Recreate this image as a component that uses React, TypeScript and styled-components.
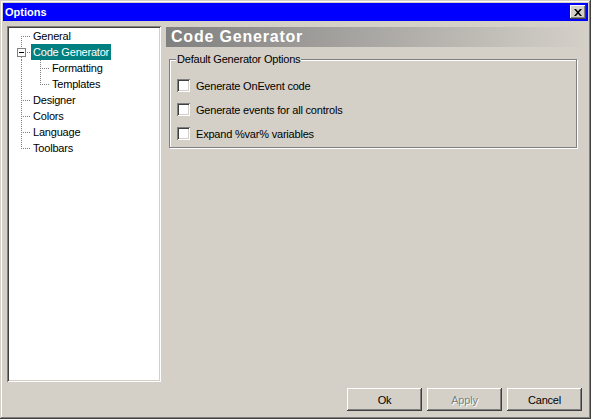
import React from "react";
import styled, { createGlobalStyle } from "styled-components";

const GlobalStyle = createGlobalStyle`
  html, body {
    margin: 0;
    padding: 0;
    background: #d4d0c8;
  }
  body {
    font-family: "Liberation Sans", Arial, sans-serif;
    font-size: 11px;
    letter-spacing: -0.2px;
    color: #000;
  }
`;

const Window = styled.div`
  box-sizing: border-box;
  width: 591px;
  height: 419px;
  padding: 3px;
  display: flex;
  flex-direction: column;
  background: #d4d0c8;
  box-shadow: inset -1px -1px #404040, inset 1px 1px #d4d0c8,
    inset -2px -2px #808080, inset 2px 2px #fff;
`;

const TitleBar = styled.div`
  flex: none;
  height: 18px;
  display: flex;
  align-items: center;
  padding: 0 2px;
  background: #0000ff;
  color: #fff;
  font-weight: bold;
  letter-spacing: 0;
`;

const TitleText = styled.span`
  flex: 1;
`;

const CloseButton = styled.button`
  width: 16px;
  height: 14px;
  padding: 0;
  border: none;
  display: flex;
  align-items: center;
  justify-content: center;
  background: #d4d0c8;
  box-shadow: inset -1px -1px #404040, inset 1px 1px #fff,
    inset -2px -2px #808080;
`;

const Body = styled.div`
  flex: 1;
  min-height: 0;
  margin-top: 5px;
  display: flex;
  gap: 5px;
  padding: 0 2px 0 4px;
`;

const TreePanel = styled.div`
  box-sizing: border-box;
  width: 154px;
  flex: none;
  padding: 2px 2px 2px 4px;
  background: #fff;
  box-shadow: inset 1px 1px #808080, inset -1px -1px #fff,
    inset 2px 2px #404040, inset -2px -2px #d4d0c8;
`;

const TreeRow = styled.div`
  display: flex;
  align-items: center;
  height: 16px;
`;

const TreeLabel = styled.span<{ $selected?: boolean }>`
  margin-left: 1px;
  padding: 0 2px;
  line-height: 16px;
  white-space: nowrap;
  background: ${({ $selected }) => ($selected ? "#008080" : "transparent")};
  color: ${({ $selected }) => ($selected ? "#fff" : "#000")};
`;

const RightPane = styled.div`
  flex: 1;
  display: flex;
  flex-direction: column;
`;

const PageHeader = styled.div`
  margin-top: 1px;
  height: 20px;
  display: flex;
  align-items: center;
  padding-left: 5px;
  background: linear-gradient(to right, #808080, #d4d0c8);
  color: #fff;
  font-size: 16px;
  font-weight: bold;
  letter-spacing: 0.8px;
`;

const GroupBox = styled.div`
  position: relative;
  margin: 12px 9px 0 3px;
  padding: 19px 0 7px 7px;
  display: flex;
  flex-direction: column;
  gap: 11px;
  border: 1px solid #808080;
  box-shadow: 1px 1px 0 #fff, inset 1px 1px 0 #fff;
`;

const Legend = styled.span`
  position: absolute;
  top: -7px;
  left: 6px;
  padding: 0 1px;
  line-height: 13px;
  background: #d4d0c8;
`;

const CheckRow = styled.label`
  display: flex;
  align-items: center;
  gap: 6px;
  height: 13px;
`;

const CheckBox = styled.span`
  width: 13px;
  height: 13px;
  flex: none;
  background: #fff;
  box-shadow: inset 1px 1px #808080, inset -1px -1px #fff,
    inset 2px 2px #404040, inset -2px -2px #d4d0c8;
`;

const Footer = styled.div`
  flex: none;
  display: flex;
  justify-content: flex-end;
  gap: 5px;
  padding: 6px 6px 5px 0;
`;

const Button = styled.button<{ $disabled?: boolean }>`
  width: 75px;
  height: 23px;
  padding: 0;
  border: none;
  background: #d4d0c8;
  font-family: inherit;
  font-size: 11px;
  letter-spacing: -0.2px;
  color: ${({ $disabled }) => ($disabled ? "#808080" : "#000")};
  text-shadow: ${({ $disabled }) => ($disabled ? "1px 1px 0 #fff" : "none")};
  box-shadow: inset -1px -1px #404040, inset 1px 1px #fff,
    inset -2px -2px #808080;
`;

type Cell = "first" | "mid" | "last" | "pass" | "box";

const Connector = ({ cell }: { cell: Cell }) => {
  const dot = {
    stroke: "#808080",
    strokeDasharray: "1 1",
    shapeRendering: "crispEdges" as const,
  };
  const up = cell === "mid" || cell === "last" || cell === "pass";
  const down = cell === "first" || cell === "mid" || cell === "pass";
  return (
    <svg width="19" height="16" viewBox="0 0 19 16" style={{ flex: "none" }}>
      {up && <line x1="10.5" y1="0" x2="10.5" y2="9" {...dot} />}
      {down && <line x1="10.5" y1="8" x2="10.5" y2="16" {...dot} />}
      {cell !== "pass" && cell !== "box" && (
        <line x1="12" y1="8.5" x2="19" y2="8.5" {...dot} />
      )}
      {cell === "box" && (
        <>
          <line x1="10.5" y1="0" x2="10.5" y2="4" {...dot} />
          <line x1="10.5" y1="13" x2="10.5" y2="16" {...dot} />
          <line x1="16" y1="8.5" x2="19" y2="8.5" {...dot} />
          <rect
            x="6.5"
            y="4.5"
            width="8"
            height="8"
            fill="#fff"
            stroke="#808080"
            shapeRendering="crispEdges"
          />
          <line
            x1="8"
            y1="8.5"
            x2="13"
            y2="8.5"
            stroke="#000"
            shapeRendering="crispEdges"
          />
        </>
      )}
    </svg>
  );
};

const treeItems: { label: string; cells: Cell[]; selected?: boolean }[] = [
  { label: "General", cells: ["first"] },
  { label: "Code Generator", cells: ["box"], selected: true },
  { label: "Formatting", cells: ["pass", "mid"] },
  { label: "Templates", cells: ["pass", "last"] },
  { label: "Designer", cells: ["mid"] },
  { label: "Colors", cells: ["mid"] },
  { label: "Language", cells: ["mid"] },
  { label: "Toolbars", cells: ["last"] },
];

const options = [
  "Generate OnEvent code",
  "Generate events for all controls",
  "Expand %var% variables",
];

export default function App() {
  return (
    <>
      <GlobalStyle />
      <Window>
        <TitleBar>
          <TitleText>Options</TitleText>
          <CloseButton aria-label="Close">
            <svg width="8" height="7" viewBox="0 0 8 7">
              <path
                d="M0 0h2l2 2.2L6 0h2L5 3.5 8 7H6L4 4.8 2 7H0l3-3.5z"
                fill="#000"
              />
            </svg>
          </CloseButton>
        </TitleBar>
        <Body>
          <TreePanel>
            {treeItems.map((item) => (
              <TreeRow key={item.label}>
                {item.cells.map((c, i) => (
                  <Connector key={i} cell={c} />
                ))}
                <TreeLabel $selected={item.selected}>{item.label}</TreeLabel>
              </TreeRow>
            ))}
          </TreePanel>
          <RightPane>
            <PageHeader>Code Generator</PageHeader>
            <GroupBox>
              <Legend>Default Generator Options</Legend>
              {options.map((o) => (
                <CheckRow key={o}>
                  <CheckBox />
                  <span>{o}</span>
                </CheckRow>
              ))}
            </GroupBox>
          </RightPane>
        </Body>
        <Footer>
          <Button>Ok</Button>
          <Button $disabled>Apply</Button>
          <Button>Cancel</Button>
        </Footer>
      </Window>
    </>
  );
}
